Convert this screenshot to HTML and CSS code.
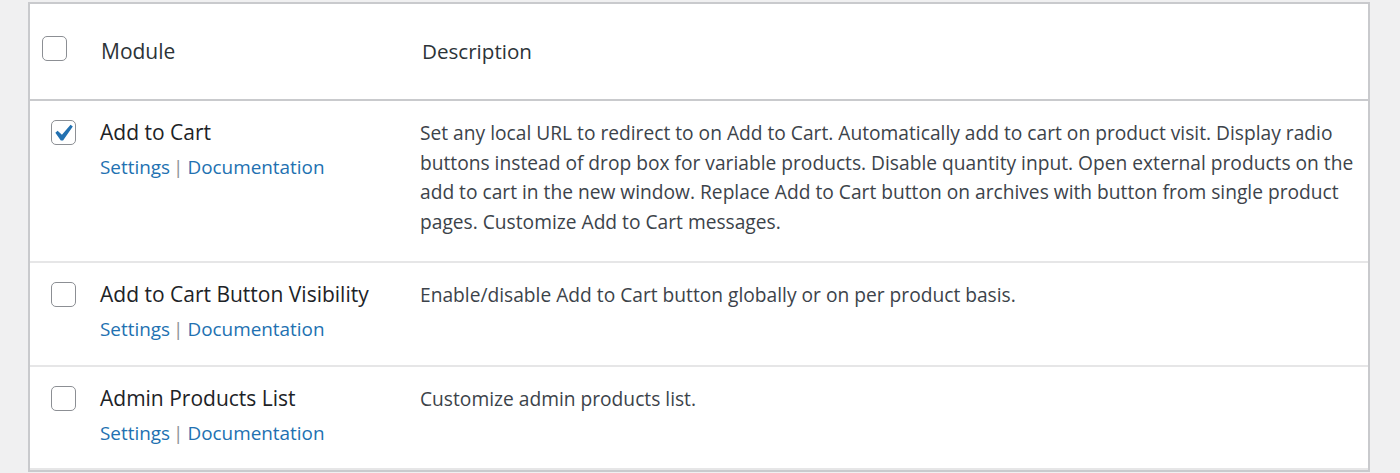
FILE: index.html
```html
<!DOCTYPE html>
<html lang="en">
<head>
<meta charset="utf-8">
<title>Modules</title>
<link rel="stylesheet" href="styles.css">
</head>
<body>
<div class="wrap">
  <table class="modules">
    <colgroup>
      <col class="c-check">
      <col class="c-module">
      <col class="c-desc">
    </colgroup>
    <thead>
      <tr>
        <th class="check"><span class="cb"></span></th>
        <th class="h-module">Module</th>
        <th class="h-desc">Description</th>
      </tr>
    </thead>
    <tbody>
      <tr>
        <td class="check"><span class="cb checked"><svg viewBox="3.78 2.6 13.1 13.1" width="22" height="22"><path d="M14.83 4.89l1.34.94-5.81 8.38H9.02L5.78 9.67l1.34-1.25 2.57 2.4z"/></svg></span></td>
        <td class="module">
          <div class="title">Add to Cart</div>
          <div class="actions"><a href="#">Settings</a><span class="sep">|</span><a href="#">Documentation</a></div>
        </td>
        <td class="desc">Set any local URL to redirect to on Add to Cart. Automatically add to cart on product visit. Display radio buttons instead of drop box for variable products. Disable quantity input. Open external products on the add to cart in the new window. Replace Add to Cart button on archives with button from single product pages. Customize Add to Cart messages.</td>
      </tr>
      <tr>
        <td class="check"><span class="cb"></span></td>
        <td class="module">
          <div class="title">Add to Cart Button Visibility</div>
          <div class="actions"><a href="#">Settings</a><span class="sep">|</span><a href="#">Documentation</a></div>
        </td>
        <td class="desc">Enable/disable Add to Cart button globally or on per product basis.</td>
      </tr>
      <tr>
        <td class="check"><span class="cb"></span></td>
        <td class="module">
          <div class="title">Admin Products List</div>
          <div class="actions"><a href="#">Settings</a><span class="sep">|</span><a href="#">Documentation</a></div>
        </td>
        <td class="desc">Customize admin products list.</td>
      </tr>
    </tbody>
  </table>
</div>
</body>
</html>
```
FILE: styles.css
```css
html, body {
  margin: 0;
  padding: 0;
  background: #f0f0f1;
  height: 100%;
  overflow: hidden;
}
body {
  font-family: "Open Sans", "Noto Sans", sans-serif;
  font-size: 21px;
  line-height: 29.5px;
  color: #3c434a;
}
.wrap {
  padding: 2px 30px 0 28px;
}
.modules {
  width: 100%;
  table-layout: fixed;
  border-collapse: separate;
  border-spacing: 0;
  background: #fff;
  border: 2px solid #c9cacd;
}
.c-check { width: 56px; }
.c-module { width: 320px; }
th, td {
  vertical-align: top;
  text-align: left;
  font-weight: 400;
  padding: 0;
}
thead th {
  border-bottom: 2px solid #c9cacd;
  color: #2c3338;
}
thead th.check {
  padding: 32px 0 0 12px;
  height: 63px;
}
.h-module {
  padding: 33px 10px 32px 15px;
}
.h-desc {
  padding: 33px 14px 32px 16px;
  font-size: 20.6px;
}
tbody td {
  border-bottom: 2px solid #e6e6e7;
}
tbody td.check {
  padding: 19px 0 0 21px;
}
td.module {
  padding: 17px 6px 20px 14px;
}
td.desc {
  padding: 17px 4px 25px 14px;
  font-size: 19.2px;
  line-height: 29.6px;
}
.title {
  color: #1d2327;
  white-space: nowrap;
}
.actions {
  margin-top: 5.5px;
  font-size: 18.9px;
  color: #8c8f94;
}
.actions a {
  color: #2271b1;
  text-decoration: none;
}
.sep {
  margin: 0 4px 0 3px;
}
.cb {
  display: block;
  box-sizing: border-box;
  width: 25px;
  height: 25px;
  border: 1.5px solid #8c8f94;
  border-radius: 5px;
  background: #fff;
}
.cb svg {
  display: block;
  fill: #2271b1;
}
```
